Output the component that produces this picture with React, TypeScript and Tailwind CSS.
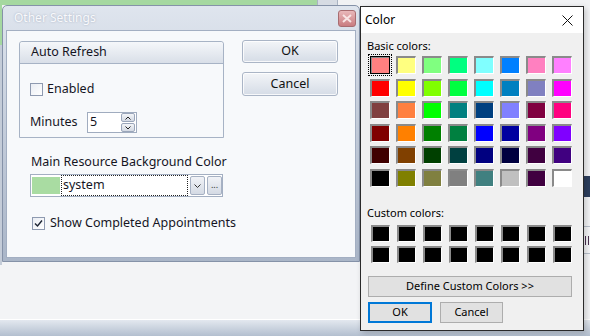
import React from 'react';

const basicColors = [
  ['#ff8080', '#ffff80', '#80ff80', '#00ff80', '#80ffff', '#0080ff', '#ff80c0', '#ff80ff'],
  ['#ff0000', '#ffff00', '#80ff00', '#00ff40', '#00ffff', '#0080c0', '#8080c0', '#ff00ff'],
  ['#804040', '#ff8040', '#00ff00', '#008080', '#004080', '#8080ff', '#800040', '#ff0080'],
  ['#800000', '#ff8000', '#008000', '#008040', '#0000ff', '#0000a0', '#800080', '#8000ff'],
  ['#400000', '#804000', '#004000', '#004040', '#000080', '#000040', '#400040', '#400080'],
  ['#000000', '#808000', '#808040', '#808080', '#408080', '#c0c0c0', '#400040', '#ffffff'],
];

const Swatch = ({ color, selected }: { color: string; selected?: boolean }) => (
  <div
    className="relative w-[20px] h-[18px] border-t-2 border-l-2 border-r border-b border-t-[#8a8a8a] border-l-[#8a8a8a] border-r-white border-b-white"
    style={{ backgroundColor: color }}
  >
    {selected && (
      <>
        <span className="absolute -top-[2px] -left-[2px] -right-[1px] -bottom-[1px] border border-black" />
        <span className="absolute -top-[4px] -left-[4px] -right-[3px] -bottom-[3px] border border-dotted border-black" />
      </>
    )}
  </div>
);

const Checkbox = ({ checked }: { checked?: boolean }) => (
  <div className="w-[13px] h-[13px] border border-[#8e9ab0] bg-gradient-to-br from-[#e9edf3] to-white flex items-center justify-center">
    {checked && (
      <svg width="9" height="9" viewBox="0 0 9 9">
        <path d="M1 4.5 L3.5 7 L8 1.5" fill="none" stroke="#1c2433" strokeWidth="1.4" />
      </svg>
    )}
  </div>
);

const AeroButton = ({ label, h }: { label: string; h: string }) => (
  <div className={`w-[96px] ${h} rounded-[3px] border border-[#aab5c6] bg-gradient-to-b from-[#f3f5f8] to-[#d5dce6] shadow-[inset_0_0_0_1px_rgba(255,255,255,0.8)] flex items-center justify-center text-[12.5px] text-[#111]`}>
    {label}
  </div>
);

const SmallBtn = ({ children, w }: { children: React.ReactNode; w: string }) => (
  <div className={`${w} h-[19px] rounded-[2px] border border-[#a6b1c3] bg-gradient-to-b from-[#f1f3f7] to-[#d4dae4] flex items-center justify-center`}>
    {children}
  </div>
);

const OtherSettings = () => (
  <div className="absolute left-[2px] top-[5px] w-[358px] h-[257px] flex flex-col rounded-t-[5px] border border-[#8592a8] bg-gradient-to-b from-[#dfe5ee] via-[#c3ccda] to-[#aab6c8] font-['Noto_Sans',sans-serif]">
    {/* title bar */}
    <div className="relative h-[24px] flex items-center pl-[11px] text-[12px] text-[#f8f9fc] [text-shadow:0_0_2px_rgba(90,105,130,0.45)]">
      Other Settings
      <div className="absolute right-[3px] top-[4px] w-[18px] h-[17px] rounded-[3px] border border-[#a86c70] bg-gradient-to-b from-[#e9b8ba] to-[#c97c80] flex items-center justify-center">
        <svg width="10" height="9" viewBox="0 0 10 9">
          <path d="M1 1 L9 8 M9 1 L1 8" stroke="#f8e4e4" strokeWidth="2" />
        </svg>
      </div>
    </div>
    {/* client */}
    <div className="flex-1 mx-[3px] mb-[3px] bg-[#f7f9fb] border border-[#a3afc2] pl-[12px] pt-[10px] text-[12.5px] text-[#15151f]">
      <div className="flex">
        <div className="w-[205px] h-[97px] rounded-t-[3px] border border-[#a7b3c5] flex flex-col">
          <div className="h-[22px] flex items-center pl-[11px] rounded-t-[3px] border-b border-[#a7b3c5] bg-gradient-to-b from-[#f5f7fa] to-[#d9dfe8]">
            Auto Refresh
          </div>
          <div className="flex-1 bg-[#f7f9fb] pl-[10px] pt-[18px] flex flex-col">
            <div className="flex items-center gap-[4px] h-[14px]">
              <Checkbox />
              <span>Enabled</span>
            </div>
            <div className="flex items-center mt-[16px] h-[21px]">
              <span className="w-[57px]">Minutes</span>
              <div className="w-[50px] h-[21px] border border-[#a0acbf] bg-white flex items-center justify-between pl-[2px] pr-[1px]">
                <span>5</span>
                <div className="flex flex-col gap-[1px]">
                  <div className="w-[14px] h-[9px] rounded-[2px] border border-[#9aa6ba] bg-gradient-to-b from-[#f3f5f8] to-[#d3d9e3] flex items-center justify-center">
                    <svg width="6" height="4" viewBox="0 0 6 4"><path d="M0.5 3.5 L3 1 L5.5 3.5" fill="none" stroke="#222" strokeWidth="1" /></svg>
                  </div>
                  <div className="w-[14px] h-[9px] rounded-[2px] border border-[#9aa6ba] bg-gradient-to-b from-[#f3f5f8] to-[#d3d9e3] flex items-center justify-center">
                    <svg width="6" height="4" viewBox="0 0 6 4"><path d="M0.5 0.5 L3 3 L5.5 0.5" fill="none" stroke="#222" strokeWidth="1" /></svg>
                  </div>
                </div>
              </div>
            </div>
          </div>
        </div>
        <div className="ml-[18px] flex flex-col gap-[9px] -mt-[1px]">
          <AeroButton label="OK" h="h-[23px]" />
          <AeroButton label="Cancel" h="h-[24px]" />
        </div>
      </div>
      <div className="ml-[11px]">
        <div className="mt-[16px] h-[16px] flex items-center pl-[1px]">Main Resource Background Color</div>
        <div className="mt-[4px] w-[193px] h-[23px] border border-[#a3afc2] bg-white flex items-center pl-[1px] gap-[1px]">
          <div className="w-[28px] h-[17px] bg-[#a9dca2]" />
          <div className="w-[127px] h-[21px] border border-dotted border-[#222] flex items-center pl-[1px]">system</div>
          <SmallBtn w="w-[15px] ml-[1px]">
            <svg width="7" height="4" viewBox="0 0 7 4"><path d="M0.5 0.5 L3.5 3.5 L6.5 0.5" fill="none" stroke="#333" strokeWidth="1" /></svg>
          </SmallBtn>
          <SmallBtn w="w-[15px] ml-[1px]">
            <span className="text-[9px] leading-none text-[#333] -mt-[3px]">...</span>
          </SmallBtn>
        </div>
        <div className="mt-[19px] flex items-center gap-[5px] pl-[2px] h-[14px]">
          <Checkbox checked />
          <span>Show Completed Appointments</span>
        </div>
      </div>
    </div>
  </div>
);

const ColorDialog = () => (
  <div className="absolute left-[360px] top-[6px] w-[224px] h-[325px] border border-[#2a2a2a] bg-[#f0f0f0] flex flex-col font-['Noto_Sans',sans-serif] text-black shadow-[2px_2px_6px_rgba(0,0,0,0.2)]">
    <div className="h-[26px] bg-white flex items-center justify-between pl-[4px] pr-[10px] text-[12px]">
      <span>Color</span>
      <svg width="11" height="11" viewBox="0 0 11 11">
        <path d="M0.5 0.5 L10.5 10.5 M10.5 0.5 L0.5 10.5" stroke="#111" strokeWidth="1" />
      </svg>
    </div>
    <div className="flex flex-col pl-[6px] text-[11px]">
      <div className="mt-[6px] h-[14px] flex items-center">Basic colors:</div>
      <div className="mt-[3px] ml-[3px] grid grid-cols-[repeat(8,20px)] gap-x-[6px] gap-y-[4.6px]">
        {basicColors.flat().map((c, i) => (
          <Swatch key={i} color={c} selected={i === 0} />
        ))}
      </div>
      <div className="mt-[19px] h-[14px] flex items-center">Custom colors:</div>
      <div className="mt-[5px] ml-[4px] grid grid-cols-[repeat(8,19px)] gap-x-[7px] gap-y-[4px]">
        {Array.from({ length: 16 }).map((_, i) => (
          <div key={i} className="w-[19px] h-[17px] bg-black border-t-2 border-l-2 border-r border-b border-t-[#8a8a8a] border-l-[#8a8a8a] border-r-white border-b-white" />
        ))}
      </div>
      <div className="mt-[13px] ml-[1px] w-[204px] h-[21px] border border-[#adadad] bg-[#e1e1e1] flex items-center justify-center">
        Define Custom Colors &gt;&gt;
      </div>
      <div className="mt-[5px] ml-[1px] flex gap-[8px]">
        <div className="w-[64px] h-[21px] border-2 border-[#0078d7] bg-[#e1e1e1] flex items-center justify-center">OK</div>
        <div className="w-[63px] h-[21px] border border-[#adadad] bg-[#e1e1e1] flex items-center justify-center">Cancel</div>
      </div>
    </div>
  </div>
);

export default function App() {
  return (
    <div className="relative w-[590px] h-[336px] overflow-hidden bg-[#f3f4f6]">
      {/* desktop / app behind the dialogs */}
      <div className="absolute left-0 top-0 w-[317px] h-[5px] bg-[#a5d8a0]" />
      <div className="absolute left-[317px] top-0 w-[21px] h-[5px] bg-[#d6dbe3] border-x border-[#a9b3c2]" />
      <div className="absolute left-[338px] top-0 w-[252px] h-[6px] bg-[#f1f2f4]" />
      <div className="absolute left-0 top-0 w-[2px] h-[45px] bg-[#a5d8a0]" />
      <div className="absolute left-0 top-[45px] w-[2px] h-[220px] bg-[#c4ccd8]" />
      <div className="absolute left-[584px] top-[176px] w-[6px] h-[21px] bg-[#2d3f5e]" />
      <div className="absolute left-[584px] top-[226px] w-[6px] h-[28px] border-y border-[#b8c0cc] bg-[#f5f6f8] flex items-center gap-[2px] pl-[1px]">
        <span className="w-[1px] h-[9px] bg-[#4a3050]" />
        <span className="w-[1px] h-[9px] bg-[#4a3050]" />
      </div>
      <div className="absolute left-0 top-[319px] w-[590px] h-[17px] border-t border-white bg-gradient-to-b from-[#e3e8ef] to-[#b3bfcf]" />
      <OtherSettings />
      <ColorDialog />
    </div>
  );
}
